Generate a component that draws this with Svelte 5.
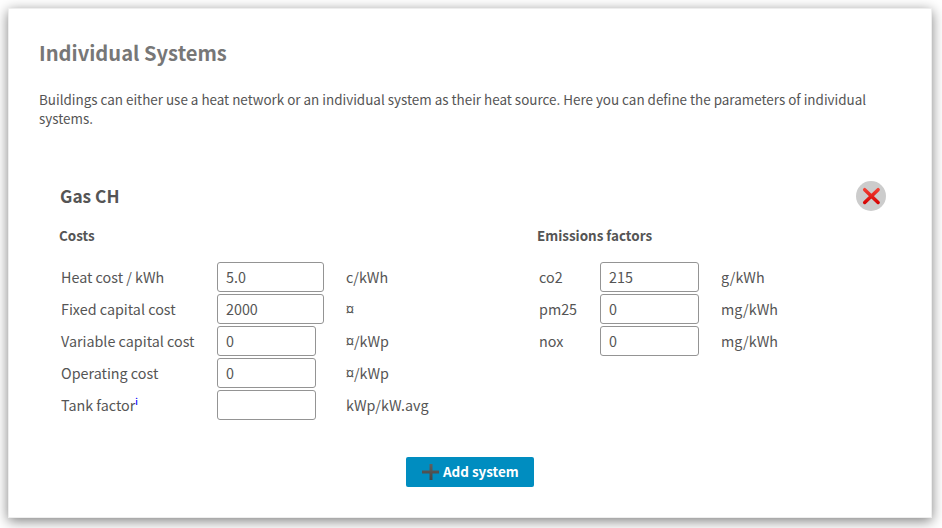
<script>
  const costs = [
    { label: 'Heat cost / kWh', value: '5.0', unit: 'c/kWh', wide: true },
    { label: 'Fixed capital cost', value: '2000', unit: '¤', wide: true },
    { label: 'Variable capital cost', value: '0', unit: '¤/kWp' },
    { label: 'Operating cost', value: '0', unit: '¤/kWp' },
    { label: 'Tank factor', value: '', unit: 'kWp/kW.avg', info: true }
  ];
  const emissions = [
    { label: 'co2', value: '215', unit: 'g/kWh' },
    { label: 'pm25', value: '0', unit: 'mg/kWh' },
    { label: 'nox', value: '0', unit: 'mg/kWh' }
  ];
</script>

{#snippet field(row)}
  <div class="row">
    <span class="label">{row.label}{#if row.info}<sup>i</sup>{/if}</span>
    <span class="cell"><input class:wide={row.wide} value={row.value} aria-label={row.label} /></span>
    <span class="unit">{row.unit}</span>
  </div>
{/snippet}

<main class="panel">
  <h1>Individual Systems</h1>
  <p>Buildings can either use a heat network or an individual system as their heat source. Here you can define the parameters of individual systems.</p>

  <section class="system">
    <header>
      <h2>Gas CH</h2>
      <button class="remove" aria-label="Remove system">
        <svg width="30" height="30" viewBox="0 0 30 30">
          <defs>
            <linearGradient id="red" x1="0" y1="7" x2="0" y2="23" gradientUnits="userSpaceOnUse">
              <stop offset="0" stop-color="#f44336" />
              <stop offset="1" stop-color="#d50000" />
            </linearGradient>
          </defs>
          <path d="M8.7 8.7L22.1 21.5M22.1 8.7L8.7 21.5" stroke="url(#red)" stroke-width="3.5" stroke-linecap="round" />
        </svg>
      </button>
    </header>
    <div class="columns">
      <div class="costs">
        <h3>Costs</h3>
        {#each costs as row}{@render field(row)}{/each}
      </div>
      <div class="emissions">
        <h3>Emissions factors</h3>
        {#each emissions as row}{@render field(row)}{/each}
      </div>
    </div>
  </section>

  <button class="add">
    <svg width="18" height="18" viewBox="0 0 18 18">
      <defs>
        <linearGradient id="grey" x1="0" y1="0" x2="0" y2="18" gradientUnits="userSpaceOnUse">
          <stop offset="0" stop-color="#616161" />
          <stop offset="1" stop-color="#424242" />
        </linearGradient>
      </defs>
      <path d="M7.5 1h3v6.5h6.5v3h-6.5v6.5h-3v-6.5H0v-3h7.5z" fill="url(#grey)" />
    </svg>
    <span>Add system</span>
  </button>
</main>

<style>
  :global(body) {
    margin: 0;
    background: #fff;
    overflow: hidden;
  }
  :global(#app) {
    display: flow-root;
    box-sizing: border-box;
    height: 528px;
  }
  .panel {
    box-sizing: border-box;
    width: 924px;
    height: 510px;
    margin: 8px;
    padding: 29px 31px 0;
    border: 1px solid #eee;
    background: #fff;
    box-shadow: 0 3px 12px rgba(0, 0, 0, 0.5);
    color: #555;
    font: 14.33px/20px 'Noto Sans CJK SC', 'Noto Sans', sans-serif;
    display: flex;
    flex-direction: column;
  }
  h1, h2, h3, p {
    margin: 0;
  }
  h1 {
    margin-left: -1px;
    color: #777;
    font-size: 20.15px;
    line-height: 30px;
  }
  p {
    margin: 22px 0 0 -1px;
    font-size: 13.435px;
    line-height: 19px;
  }
  .system {
    margin-top: 53px;
    padding-left: 20px;
  }
  header {
    display: flex;
    align-items: center;
    justify-content: space-between;
    padding-right: 14px;
  }
  h2 {
    font-size: 17.3px;
    line-height: 30px;
  }
  .remove {
    width: 30px;
    height: 30px;
    padding: 0;
    border: 0;
    border-radius: 50%;
    background: #ccc;
  }
  .remove svg {
    display: block;
  }
  .columns {
    display: flex;
    margin-top: 14px;
  }
  .costs {
    width: 478px;
    margin-left: -1px;
  }
  h3 {
    margin-bottom: 16px;
    font-size: 13.43px;
    line-height: 20px;
  }
  .row {
    display: flex;
    align-items: center;
    height: 32px;
    padding-left: 2px;
    white-space: nowrap;
  }
  .label {
    width: 156px;
  }
  .emissions .label {
    width: 61px;
  }
  .cell {
    display: flex;
    width: 129px;
  }
  .emissions .cell {
    width: 121px;
  }
  sup {
    color: #00f;
    font-size: 9px;
    font-weight: 500;
    line-height: 0;
    vertical-align: 6px;
  }
  input {
    box-sizing: border-box;
    width: 99px;
    height: 30px;
    padding: 0 8px 2px;
    border: 1px solid #949494;
    border-radius: 3px;
    background: #fff;
    color: #555;
    font: inherit;
  }
  input.wide {
    width: 107px;
  }
  .add {
    display: flex;
    align-items: center;
    align-self: center;
    width: 128px;
    height: 30px;
    margin-top: 36px;
    padding: 0 0 0 16px;
    gap: 3px;
    border: 0;
    border-radius: 2px;
    background: #008dc0;
    color: #fff;
    font: bold 13.43px/20px 'Noto Sans CJK SC', 'Noto Sans', sans-serif;
    white-space: nowrap;
  }
  .add span {
    padding-bottom: 2px;
  }
</style>
